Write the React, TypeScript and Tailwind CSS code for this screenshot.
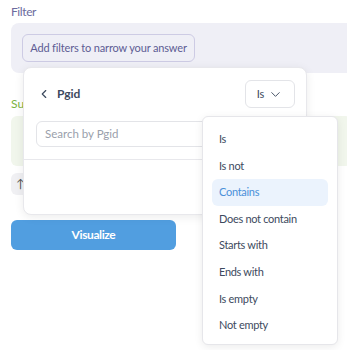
import { ChevronLeft, ChevronDown } from 'lucide-react'

const operators = ['Is', 'Is not', 'Contains', 'Does not contain', 'Starts with', 'Ends with', 'Is empty', 'Not empty']

export default function App() {
  return (
    <div className="relative h-[350px] w-[347px] overflow-hidden bg-white font-['Lato',sans-serif]">
      {/* page underneath */}
      <div className="flex flex-col pl-[11px] pt-[3px]">
        <div className="text-[12px] leading-[18px] tracking-[-0.4px] text-[#6c6b9e]">Filter</div>
        <div className="mt-[2px] flex h-[50px] w-[350px] items-center rounded-l-lg bg-[#efeff6] pl-[11px]">
          <button className="h-[28px] w-[173px] rounded-md border border-[#cdcbe4] text-[11px] tracking-[-0.15px] text-[#5d5c94]">
            Add filters to narrow your answer
          </button>
        </div>
        <div className="mt-[23px] text-[12px] leading-[16px] text-[#7cb342]">Summary</div>
        <div className="mt-[4px] h-[50px] w-[340px] rounded-md bg-[#f1f6ec]" />
        <div className="mt-[7px] flex h-[22px] w-[60px] items-center rounded-md bg-[#f0f0f3] pl-[5px] text-[12px] text-[#555]">
          ↑
        </div>
        <button className="mt-[25px] h-[30px] w-[165px] rounded-md bg-[#519ee0] text-[12px] font-bold tracking-[-0.4px] text-white">
          Visualize
        </button>
      </div>

      {/* filter popover */}
      <div className="absolute left-[23px] top-[67px] h-[148px] w-[284px] rounded-lg border border-[#e8e8ec] bg-white shadow-[0_2px_10px_rgba(0,0,0,0.08)]">
        <div className="flex items-center justify-between pl-[13px] pr-[11px] pt-[12px]">
          <div className="flex items-center gap-[6px] text-[#3d4a5e]">
            <ChevronLeft className="h-[14px] w-[14px]" strokeWidth={2} />
            <span className="text-[12px] font-bold">Pgid</span>
          </div>
          <div className="flex h-[28px] w-[50px] items-center justify-center gap-[4px] rounded-md border border-[#e3e4e8] text-[11px] text-[#3d4a5e]">
            Is
            <ChevronDown className="h-[15px] w-[15px]" strokeWidth={1.5} />
          </div>
        </div>
        <div className="mt-[13px] px-[12px]">
          <div className="flex h-[26px] items-center rounded-md border border-[#e3e4e8] pl-[8px] text-[11.5px] text-[#9aa0ab]">
            Search by Pgid
          </div>
        </div>
        <div className="mt-[12px] border-t border-[#e8e8ec]" />
      </div>

      {/* operator menu */}
      <div className="absolute left-[202px] top-[116px] h-[229px] w-[136px] rounded-md border border-[#e6e6ea] bg-white px-[9px] pt-[9px] shadow-[0_2px_8px_rgba(0,0,0,0.08)]">
        {operators.map((op) => (
          <div
            key={op}
            className={
              op === 'Contains'
                ? 'flex h-[26.6px] items-center rounded-md bg-[#ebf3fd] px-[7px] text-[11px] tracking-[-0.3px] text-[#4a90d9]'
                : 'flex h-[26.6px] items-center px-[7px] text-[11px] tracking-[-0.3px] text-[#3d4a5e]'
            }
          >
            {op}
          </div>
        ))}
      </div>
    </div>
  )
}
